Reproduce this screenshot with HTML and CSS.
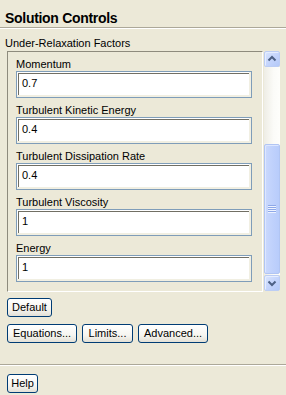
FILE: index.html
```html
<!DOCTYPE html>
<html>
<head>
<meta charset="utf-8">
<link rel="stylesheet" href="styles.css">
</head>
<body>
<div class="title">Solution Controls</div>
<div class="rule-white"></div>
<div class="group-label">Under-Relaxation Factors</div>
<div class="panel-row">
  <div class="frame">
    <div class="field">
      <div class="field-label">Momentum</div>
      <div class="field-input">0.7</div>
    </div>
    <div class="field">
      <div class="field-label">Turbulent Kinetic Energy</div>
      <div class="field-input">0.4</div>
    </div>
    <div class="field">
      <div class="field-label">Turbulent Dissipation Rate</div>
      <div class="field-input">0.4</div>
    </div>
    <div class="field">
      <div class="field-label">Turbulent Viscosity</div>
      <div class="field-input">1</div>
    </div>
    <div class="field">
      <div class="field-label">Energy</div>
      <div class="field-input">1</div>
    </div>
  </div>
  <div class="vscroll">
    <div class="sb-btn">
      <svg width="14" height="14" viewBox="0 0 14 14"><polyline points="3.5,8.5 7,5 10.5,8.5" fill="none" stroke="#4d6185" stroke-width="2"/></svg>
    </div>
    <div class="sb-track">
      <div class="sb-thumb"><div class="sb-grip"></div></div>
    </div>
    <div class="sb-btn">
      <svg width="14" height="14" viewBox="0 0 14 14"><polyline points="3.5,5.5 7,9 10.5,5.5" fill="none" stroke="#4d6185" stroke-width="2"/></svg>
    </div>
  </div>
</div>
<div class="actions">
  <div class="btn-row"><div class="btn w-default">Default</div></div>
  <div class="btn-row row2">
    <div class="btn w-eq">Equations...</div>
    <div class="btn w-limits">Limits...</div>
    <div class="btn w-adv">Advanced...</div>
  </div>
</div>
<div class="sep"></div>
<div class="footer">
  <div class="btn w-help">Help</div>
</div>
</body>
</html>
```

FILE: styles.css
```css
* { box-sizing: border-box; }
body {
  margin: 0;
  width: 286px;
  height: 395px;
  overflow: hidden;
  background: #ece9d8;
  font: 11px "Liberation Sans", Arial, sans-serif;
  color: #000;
}
.title {
  height: 28px;
  padding: 10px 0 0 5px;
  font-weight: bold;
  font-size: 14px;
  letter-spacing: -0.3px;
  line-height: 16px;
  border-bottom: 1px solid #aca899;
}
.rule-white { height: 1px; background: #fff; }
.group-label {
  padding: 7px 0 0 5px;
  line-height: 15px;
  height: 22px;
}
.panel-row {
  display: flex;
  align-items: flex-start;
  margin: 0 6px 0 7px;
  height: 241px;
}
.frame {
  width: 256px;
  height: 241px;
  border: 1px solid;
  border-color: #8e8b7d #fff #fff #8e8b7d;
  padding: 0 10px 0 8px;
  overflow: hidden;
}
.field-label {
  height: 19px;
  padding-top: 5px;
  line-height: 14px;
  white-space: nowrap;
}
.field-input {
  height: 27px;
  border: 1px solid #7f9db9;
  background: #fff;
  padding-left: 5px;
  line-height: 23px;
  box-shadow: inset -2px -2px 0 #f1efe2, inset 1px 1px 0 #fff, inset 2px 2px 0 #716f64;
}
.vscroll {
  width: 16px;
  height: 240px;
  margin-left: 1px;
  display: flex;
  flex-direction: column;
}
.sb-btn {
  height: 16px;
  border: 1px solid #bccdf4;
  border-radius: 2px;
  background: linear-gradient(135deg, #dbe6fe 0%, #c5d5fc 50%, #b4c9f8 100%);
  box-shadow: inset 1px 1px 0 #e6eeff;
  display: flex;
  align-items: center;
  justify-content: center;
}
.sb-track {
  flex: 1;
  background: linear-gradient(to right, #eeede5, #fbfbf8 60%, #fefefb);
  padding-bottom: 1px;
}
.sb-thumb {
  margin-top: 77px;
  height: 130px;
  border: 1px solid #b1c5f3;
  border-radius: 2px;
  background: linear-gradient(to right, #cbd9fd 0%, #c2d3fc 40%, #b8ccfb 100%);
  box-shadow: inset 1px 1px 0 #dde7ff;
  display: flex;
  align-items: center;
  justify-content: center;
}
.sb-grip {
  width: 8px;
  height: 8px;
  background: repeating-linear-gradient(to bottom, #8ea8e8 0, #8ea8e8 1px, #eef3ff 1px, #eef3ff 2px);
}
.actions { padding: 6px 7px 0; }
.btn-row { display: flex; gap: 5px; }
.row2 { margin-top: 7px; }
.btn {
  height: 19px;
  border: 1px solid #003c74;
  border-radius: 3px;
  background: linear-gradient(to bottom, #ffffff 0%, #f6f5f0 60%, #e3e0d6 100%);
  line-height: 17px;
  text-align: center;
  white-space: nowrap;
}
.w-default { width: 45px; }
.w-eq { width: 70px; }
.w-limits { width: 51px; }
.w-adv { width: 70px; }
.w-help { width: 31px; }
.sep {
  margin-top: 21px;
  height: 2px;
  border-top: 1px solid #aca899;
  border-bottom: 1px solid #fff;
}
.footer { padding: 8px 7px 0; }
```
